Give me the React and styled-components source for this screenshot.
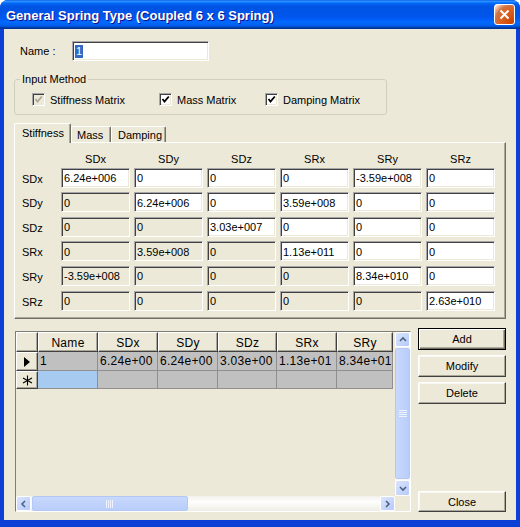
import styled, { createGlobalStyle } from "styled-components";

const GlobalStyle = createGlobalStyle`
  html, body {
    margin: 0;
    padding: 0;
    background: #fff;
  }
  body {
    font-family: "Liberation Sans", Arial, sans-serif;
    font-size: 11px;
    color: #000;
  }
`;

const Window = styled.div`
  width: 520px;
  height: 527px;
  display: flex;
  flex-direction: column;
  background: #0b3fd6;
  border-radius: 8px 8px 0 0;
  overflow: hidden;
`;

const TitleBar = styled.div`
  height: 29px;
  flex-shrink: 0;
  display: flex;
  align-items: center;
  justify-content: space-between;
  padding: 0 5px 0 6px;
  background: linear-gradient(
    to bottom,
    #0058ee 0%,
    #3593ff 4%,
    #288eff 6%,
    #127dff 8%,
    #036ffc 10%,
    #0262ee 14%,
    #0057e5 20%,
    #0054e3 24%,
    #0055eb 56%,
    #005bf5 66%,
    #026afe 76%,
    #0062ef 86%,
    #0052d6 92%,
    #0040ab 94%,
    #003092 100%
  );
`;

const Title = styled.span`
  color: #fff;
  font-weight: bold;
  font-size: 13px;
  font-family: "Liberation Sans", Arial, sans-serif;
  text-shadow: 1px 1px #0f1089;
  margin-top: 1px;
`;

const CloseBtn = styled.button`
  width: 21px;
  height: 21px;
  padding: 0;
  border: 1px solid #fff;
  border-radius: 3px;
  display: flex;
  align-items: center;
  justify-content: center;
  background: radial-gradient(
    circle at 90% 90%,
    #cc4600 0%,
    #dc6527 55%,
    #cd7546 70%,
    #ffccb2 90%,
    #fff 100%
  );
`;

const Client = styled.div`
  flex: 1;
  margin: 0 4px 7px 4px;
  background: #ece9d8;
  display: flex;
  flex-direction: column;
  padding: 12px 0 0 10px;
`;

const NameRow = styled.div`
  display: flex;
  align-items: center;
  padding-left: 6px;
`;

const Label = styled.span`
  width: ${(p) => p.$width || "auto"};
`;

const sunken = `
  box-sizing: border-box;
  border-style: solid;
  border-width: 1px;
  border-color: #a7a6aa #fff #fff #a7a6aa;
  box-shadow: inset 1px 1px 0 #404040, inset -1px -1px 0 #ece9d8;
`;

const NameBox = styled.div`
  ${sunken}
  width: 137px;
  height: 20px;
  background: #fff;
  display: flex;
  align-items: center;
  padding-left: 2px;
  font-size: 11px;
`;

const Selected = styled.span`
  background: #316ac5;
  color: #fff;
  padding: 0 1px;
  line-height: 13px;
`;

const GroupBox = styled.fieldset`
  width: 373px;
  box-sizing: border-box;
  margin: 12px 0 0 0;
  padding: 7px 0 8px 0;
  border: 1px solid #d0d0bf;
  border-radius: 3px;
`;

const Legend = styled.legend`
  margin-left: 5px;
  padding: 0 2px;
  line-height: 13px;
  color: #000;
`;

const CheckRow = styled.div`
  display: flex;
  align-items: center;
  height: 13px;
  padding-left: 17px;
`;

const CheckItem = styled.label`
  display: flex;
  align-items: center;
  gap: 5px;
  width: ${(p) => p.$width};
`;

const Box = styled.span`
  ${sunken}
  width: 13px;
  height: 13px;
  display: flex;
  align-items: center;
  justify-content: center;
  background: ${(p) => (p.$disabled ? "#ece9d8" : "#fff")};
`;

const Tabs = styled.div`
  display: flex;
  align-items: flex-end;
  height: 19px;
  margin-top: 8px;
`;

const Tab = styled.div`
  position: relative;
  z-index: ${(p) => (p.$active ? 1 : 0)};
  box-sizing: border-box;
  width: ${(p) => p.$width}px;
  height: ${(p) => (p.$active ? 20 : 16)}px;
  margin-bottom: ${(p) => (p.$active ? -1 : 0)}px;
  padding-left: ${(p) => p.$pad}px;
  display: flex;
  align-items: center;
  padding-bottom: ${(p) => (p.$active ? 2 : 0)}px;
  background: #ece9d8;
  border-top: 1px solid #fff;
  border-left: 1px solid #fff;
  border-right: 1px solid #716f64;
  border-radius: 2px 2px 0 0;
  box-shadow: inset -1px 0 0 #aca899;
`;

const Panel = styled.div`
  width: 492px;
  height: 177px;
  box-sizing: border-box;
  border-style: solid;
  border-width: 1px;
  border-color: #fff #716f64 #716f64 #fff;
  box-shadow: inset -1px -1px 0 #aca899;
  padding-top: 9px;
`;

const Matrix = styled.div`
  display: grid;
  grid-template-columns: 42px repeat(6, 69px);
  grid-template-rows: 11px repeat(6, 20px);
  column-gap: 4px;
  row-gap: 4.6px;
`;

const ColHead = styled.div`
  text-align: center;
  line-height: 11px;
  margin-top: 2px;
`;

const RowHead = styled.div`
  padding-left: 7px;
  display: flex;
  align-items: center;
  padding-top: 2px;
`;

const Cell = styled.input`
  ${sunken}
  width: 69px;
  height: 20px;
  margin: 0;
  padding: 1px 2px 0 2px;
  font-family: "Liberation Sans", Arial, sans-serif;
  font-size: 11px;
  color: #000;
  background: ${(p) => (p.$enabled ? "#fff" : "#ece9d8")};
  outline: none;
`;

const Bottom = styled.div`
  display: flex;
  margin-top: 9px;
  height: 184px;
`;

const GridFrame = styled.div`
  width: 396px;
  height: 181px;
  margin: 3px 0 0 1px;
  box-sizing: border-box;
  border-style: solid;
  border-width: 1px;
  border-color: #7f7d72 #fff #fff #7f7d72;
  display: grid;
  grid-template-columns: 1fr 15px;
  grid-template-rows: 1fr 15px;
`;

const TableArea = styled.div`
  overflow: hidden;
  font-size: 12px;
  letter-spacing: 0.3px;
`;

const GridRow = styled.div`
  display: flex;
  height: ${(p) => p.$h}px;
`;

const HeadCell = styled.div`
  box-sizing: border-box;
  flex: 0 0 ${(p) => p.$w}px;
  background: #ece9d8;
  border-style: solid;
  border-width: 1px;
  border-color: #fff #404040 #404040 #fff;
  box-shadow: inset -1px -1px 0 #aca899;
  display: flex;
  align-items: center;
  justify-content: center;
  padding-top: 1px;
`;

const DataCell = styled.div`
  box-sizing: border-box;
  flex: 0 0 ${(p) => p.$w}px;
  background: ${(p) => (p.$current ? "#a6caf0" : "#c0c0c0")};
  border-right: 1px solid #8f8f8f;
  border-bottom: 1px solid #8f8f8f;
  padding: 2px 0 0 2px;
  white-space: nowrap;
  overflow: hidden;
`;

const VScroll = styled.div`
  display: flex;
  flex-direction: column;
  background: #f7f6f2;
`;

const HScroll = styled.div`
  display: flex;
  background: linear-gradient(to bottom, #f3f1ec, #fefefe 40%, #eeede5);
`;

const ArrowBtn = styled.div`
  flex: 0 0 ${(p) => p.$size || 15}px;
  box-sizing: border-box;
  border: 1px solid #fff;
  border-radius: 2px;
  background: linear-gradient(to bottom right, #dbe5fd, #b6cafa);
  display: flex;
  align-items: center;
  justify-content: center;
`;

const Thumb = styled.div`
  box-sizing: border-box;
  border: 1px solid #b4c8f6;
  border-radius: 2px;
  background: ${(p) =>
    p.$vertical
      ? "linear-gradient(to right, #c9d8fc, #b8cdfb)"
      : "linear-gradient(to bottom, #c9d8fc, #b8cdfb)"};
  display: flex;
  align-items: center;
  justify-content: center;
  ${(p) => (p.$vertical ? "flex: 1; margin: 1px 0;" : "flex: 0 0 156px; margin: 0 1px;")}
`;

const Track = styled.div`
  flex: 1;
`;

const Corner = styled.div`
  background: #ece9d8;
`;

const ButtonCol = styled.div`
  display: flex;
  flex-direction: column;
  gap: 5px;
  width: 88px;
  margin-left: 7px;
`;

const Button = styled.button`
  height: ${(p) => p.$h || 22}px;
  margin: 0;
  padding: 0;
  font-family: "Liberation Sans", Arial, sans-serif;
  font-size: 11px;
  color: #000;
  background: #ece9d8;
  border-style: solid;
  border-width: 1px;
  border-color: ${(p) => (p.$default ? "#000" : "#fff #404040 #404040 #fff")};
  box-shadow: ${(p) =>
    p.$default
      ? "inset 1px 1px 0 #fff, inset -1px -1px 0 #716f64, inset -2px -2px 0 #aca899"
      : "inset -1px -1px 0 #aca899, inset 1px 1px 0 #f8f7f2"};
  ${(p) => (p.$push ? "margin-top: auto;" : "")}
`;

const Check = ({ color }) => (
  <svg width="9" height="9" viewBox="0 0 9 9">
    <polyline
      points="1.5,4 3.5,6.5 7.8,1.5"
      fill="none"
      stroke={color}
      strokeWidth="1.8"
    />
  </svg>
);

const Chevron = ({ dir }) => {
  const pts = {
    up: "2,6 5,3 8,6",
    down: "2,3 5,6 8,3",
    left: "6,2 3,5 6,8",
    right: "3,2 6,5 3,8",
  }[dir];
  return (
    <svg width="9" height="9" viewBox="0 0 9 9">
      <polyline points={pts} fill="none" stroke="#4d6185" strokeWidth="1.6" />
    </svg>
  );
};

const Grip = ({ vertical }) => (
  <svg width="8" height="8" viewBox="0 0 8 8">
    {[0, 2, 4, 6].map((o) =>
      vertical ? (
        <line key={o} x1="0" x2="8" y1={o + 0.5} y2={o + 0.5} stroke="#eef4fe" />
      ) : (
        <line key={o} y1="0" y2="8" x1={o + 0.5} x2={o + 0.5} stroke="#eef4fe" />
      )
    )}
  </svg>
);

const axes = ["SDx", "SDy", "SDz", "SRx", "SRy", "SRz"];

const stiffness = [
  ["6.24e+006", "0", "0", "0", "-3.59e+008", "0"],
  ["0", "6.24e+006", "0", "3.59e+008", "0", "0"],
  ["0", "0", "3.03e+007", "0", "0", "0"],
  ["0", "3.59e+008", "0", "1.13e+011", "0", "0"],
  ["-3.59e+008", "0", "0", "0", "8.34e+010", "0"],
  ["0", "0", "0", "0", "0", "2.63e+010"],
];

const columns = [
  { key: "Name", w: 60 },
  { key: "SDx", w: 60 },
  { key: "SDy", w: 60 },
  { key: "SDz", w: 59 },
  { key: "SRx", w: 60 },
  { key: "SRy", w: 56 },
];

// values as the grid shows them, cut to the column width
const springRows = [
  ["1", "6.24e+00", "6.24e+00", "3.03e+00", "1.13e+01", "8.34e+01"],
];

export default function App() {
  return (
    <>
      <GlobalStyle />
      <Window>
        <TitleBar>
          <Title>General Spring Type (Coupled 6 x 6 Spring)</Title>
          <CloseBtn>
            <svg width="11" height="11" viewBox="0 0 11 11">
              <path d="M1.5 1.5 L9.5 9.5 M9.5 1.5 L1.5 9.5" stroke="#fff" strokeWidth="2" />
            </svg>
          </CloseBtn>
        </TitleBar>
        <Client>
          <NameRow>
            <Label $width="52px">Name :</Label>
            <NameBox>
              <Selected>1</Selected>
            </NameBox>
          </NameRow>

          <GroupBox>
            <Legend>Input Method</Legend>
            <CheckRow>
              <CheckItem $width="127px">
                <Box $disabled>
                  <Check color="#aca899" />
                </Box>
                Stiffness Matrix
              </CheckItem>
              <CheckItem $width="106px">
                <Box>
                  <Check color="#000" />
                </Box>
                Mass Matrix
              </CheckItem>
              <CheckItem $width="110px">
                <Box>
                  <Check color="#000" />
                </Box>
                Damping Matrix
              </CheckItem>
            </CheckRow>
          </GroupBox>

          <Tabs>
            <Tab $active $width={57} $pad={7}>Stiffness</Tab>
            <Tab $width={40} $pad={5}>Mass</Tab>
            <Tab $width={55} $pad={6}>Damping</Tab>
          </Tabs>
          <Panel>
            <Matrix>
              <div />
              {axes.map((a) => (
                <ColHead key={a}>{a}</ColHead>
              ))}
              {stiffness.map((row, r) => [
                <RowHead key={"h" + r}>{axes[r]}</RowHead>,
                ...row.map((v, c) => (
                  <Cell
                    key={r + "-" + c}
                    readOnly
                    value={v}
                    $enabled={c >= r}
                  />
                )),
              ])}
            </Matrix>
          </Panel>

          <Bottom>
            <GridFrame>
              <TableArea>
                <GridRow $h={20}>
                  <HeadCell $w={22} />
                  {columns.map((c) => (
                    <HeadCell key={c.key} $w={c.w}>
                      {c.key}
                    </HeadCell>
                  ))}
                </GridRow>
                {springRows.map((row, i) => (
                  <GridRow key={i} $h={19}>
                    <HeadCell $w={22}>
                      <svg width="8" height="10" viewBox="0 0 8 10">
                        <path d="M1 0 L7 5 L1 10 Z" fill="#000" />
                      </svg>
                    </HeadCell>
                    {row.map((v, j) => (
                      <DataCell key={j} $w={columns[j].w}>
                        {v}
                      </DataCell>
                    ))}
                  </GridRow>
                ))}
                <GridRow $h={18}>
                  <HeadCell $w={22}>
                    <svg width="11" height="11" viewBox="0 0 11 11">
                      <path
                        d="M5.5 0.5 V10.5 M1 3 L10 8 M10 3 L1 8"
                        stroke="#000"
                        strokeWidth="1.1"
                      />
                    </svg>
                  </HeadCell>
                  {columns.map((c, j) => (
                    <DataCell key={c.key} $w={c.w} $current={j === 0} />
                  ))}
                </GridRow>
              </TableArea>
              <VScroll>
                <ArrowBtn>
                  <Chevron dir="up" />
                </ArrowBtn>
                <Thumb $vertical>
                  <Grip vertical />
                </Thumb>
                <ArrowBtn $size={16}>
                  <Chevron dir="down" />
                </ArrowBtn>
              </VScroll>
              <HScroll>
                <ArrowBtn>
                  <Chevron dir="left" />
                </ArrowBtn>
                <Thumb>
                  <Grip />
                </Thumb>
                <Track />
                <ArrowBtn>
                  <Chevron dir="right" />
                </ArrowBtn>
              </HScroll>
              <Corner />
            </GridFrame>
            <ButtonCol>
              <Button $default>Add</Button>
              <Button>Modify</Button>
              <Button>Delete</Button>
              <Button $push $h={21}>Close</Button>
            </ButtonCol>
          </Bottom>
        </Client>
      </Window>
    </>
  );
}
